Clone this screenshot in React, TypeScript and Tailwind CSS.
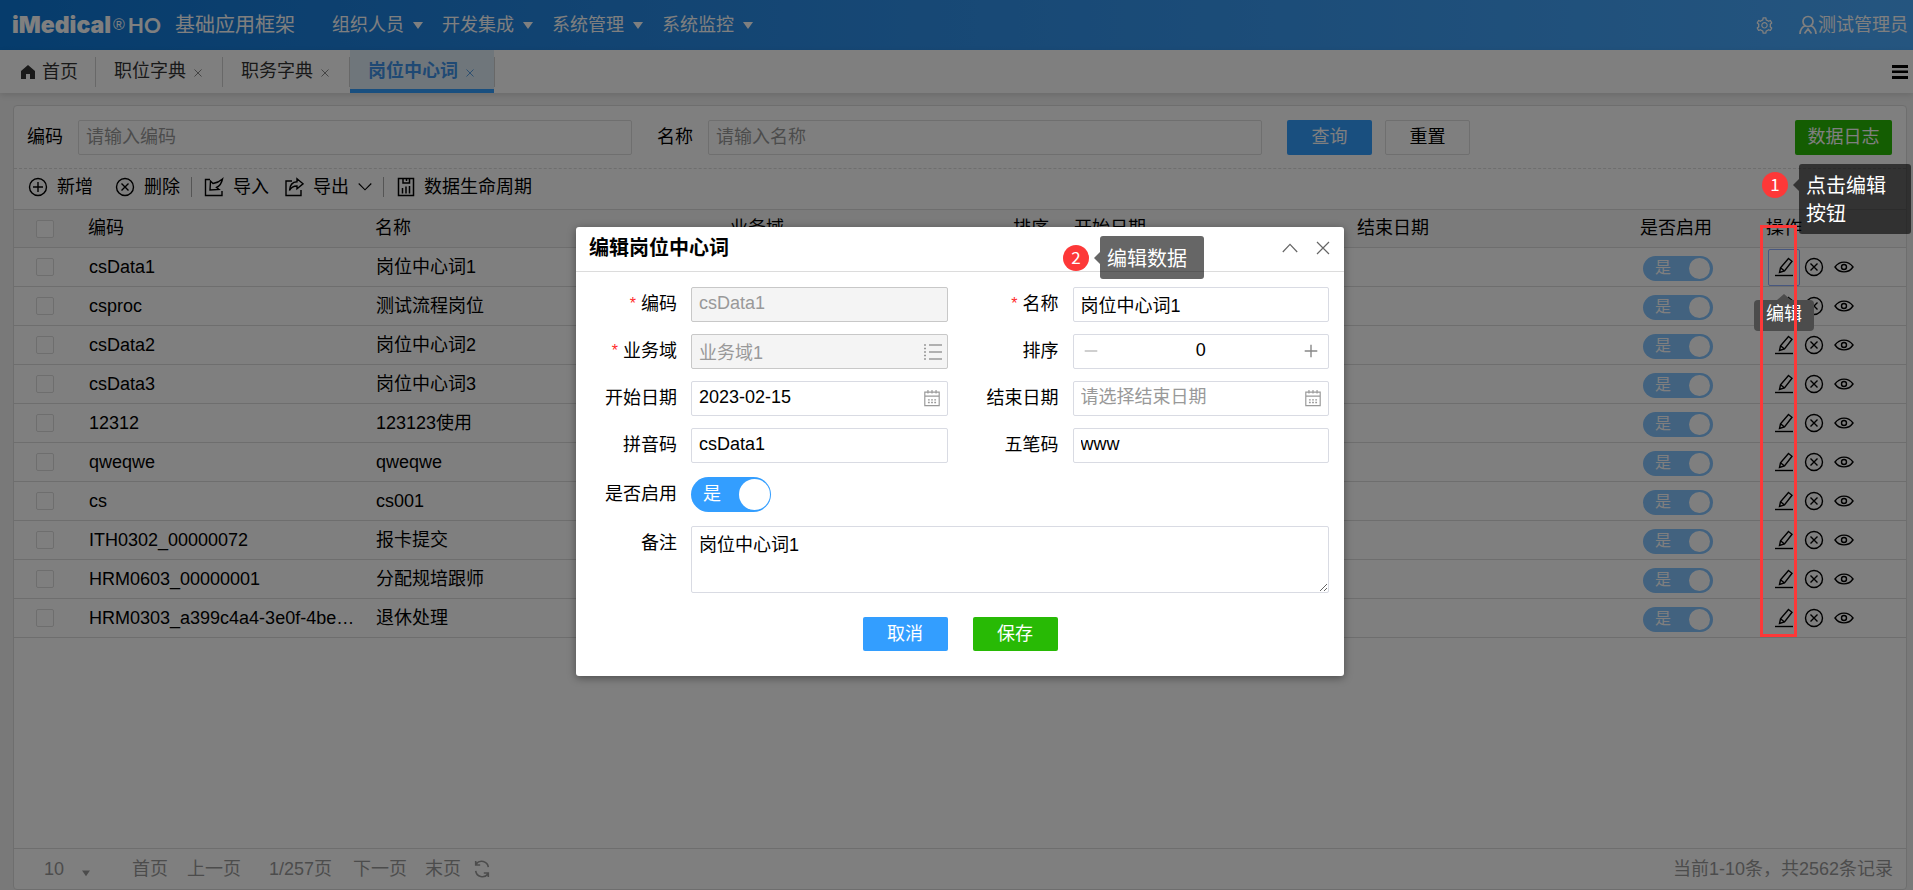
import type { ReactNode } from 'react';
import { AiOutlineSetting } from 'react-icons/ai';

interface Row {
    code: string;
    name: string;
}

const rows: Row[] = [
    { code: 'csData1', name: '岗位中心词1' },
    { code: 'csproc', name: '测试流程岗位' },
    { code: 'csData2', name: '岗位中心词2' },
    { code: 'csData3', name: '岗位中心词3' },
    { code: '12312', name: '123123使用' },
    { code: 'qweqwe', name: 'qweqwe' },
    { code: 'cs', name: 'cs001' },
    { code: 'ITH0302_00000072', name: '报卡提交' },
    { code: 'HRM0603_00000001', name: '分配规培跟师' },
    { code: 'HRM0303_a399c4a4-3e0f-4be…', name: '退休处理' },
];

const menus = ['组织人员', '开发集成', '系统管理', '系统监控'];

interface IconProps {
    size?: number;
    width?: number;
    className?: string;
    children: ReactNode;
}

function Icon({ size = 20, width = 1.4, className = '', children }: IconProps) {
    return (
        <svg
            width={size}
            height={size}
            viewBox="0 0 20 20"
            fill="none"
            stroke="currentColor"
            strokeWidth={width}
            className={`shrink-0 ${className}`}
            aria-hidden="true"
        >
            {children}
        </svg>
    );
}

function CancelIcon() {
    return (
        <Icon>
            <circle cx="10" cy="10" r="8.5" />
            <path d="M6.5 6.5l7 7M13.5 6.5l-7 7" />
        </Icon>
    );
}

function CalendarIcon() {
    return (
        <Icon size={18} width={1.3} className="text-[#999]">
            <path d="M2 3.5h16v15H2zM2 8h16M5.5 1v4M14.5 1v4M10 1v4" />
            <path d="M5.5 12h9M5.5 15h9" strokeWidth="1.5" strokeDasharray="2 1.5" />
        </Icon>
    );
}

function Caret({ size = 10 }: { size?: number }) {
    return (
        <svg width={size} height={size} viewBox="0 0 10 10" fill="currentColor" className="shrink-0" aria-hidden="true">
            <path d="M0 2h10L5 9z" />
        </svg>
    );
}

/* Top bar */
function TopBar() {
    return (
        <header className="flex h-[50px] items-center bg-linear-to-r from-[#0c78d8] to-[#4aabff] pr-[5px] pl-[12px] text-white">
            <div className="flex w-[163px] items-center">
                <span className="font-['Inter'] text-[23px] leading-6 font-black">iMedical</span>
                <span className="ml-[2px] font-['Liberation_Sans'] text-[16px] leading-4">®</span>
                <span className="ml-[3px] font-['Lato'] text-[21px] leading-6 font-bold">HO</span>
            </div>
            <h1 className="text-[20px]">基础应用框架</h1>
            <nav className="ml-[37px] flex gap-[19px]">
                {menus.map((menu) => (
                    <button key={menu} className="flex items-center gap-[9px]">
                        {menu}
                        <Caret />
                    </button>
                ))}
            </nav>
            <button className="ml-auto" aria-label="设置">
                <AiOutlineSetting size={19} />
            </button>
            <button className="ml-[24px] flex items-center">
                <Icon width={1.7}>
                    <circle cx="10" cy="6.5" r="5" />
                    <path d="M2 19c0-4 2-7 5.5-8.5M18 19c0-4-2-7-5.5-8.5M6.5 18.5L10 14l3.5 4.5" />
                </Icon>
                测试管理员
            </button>
        </header>
    );
}

interface TabProps {
    title: string;
    active?: boolean;
}

function Tab({ title, active }: TabProps) {
    return (
        <div
            className={`flex h-full items-center border-b-4 pt-[3px] pr-[19px] pl-[18px] ${
                active ? 'border-[#339eff] bg-[#dfedf7] font-bold text-[#3f93e8]' : 'border-transparent text-[#333]'
            }`}
        >
            <button>{title}</button>
            <button className={`ml-[7px] mt-1 ${active ? 'text-[#5b9fe0]' : 'text-[#888]'}`} aria-label={`关闭${title}`}>
                <Icon size={10} width={2}>
                    <path d="M3 3l14 14M17 3L3 17" />
                </Icon>
            </button>
        </div>
    );
}

function TabSeparator() {
    return <span className="h-[30px] w-px bg-[#d0d0d0]" />;
}

/* Opened pages */
function TabBar() {
    return (
        <div className="flex h-[43px] items-center bg-white pr-[5px] pl-[20px] shadow-[0_2px_6px_rgba(0,0,0,0.12)]">
            <button className="flex items-center gap-[6px] pr-[17px] text-[#333]">
                <svg width="16" height="16" viewBox="0 0 16 16" fill="currentColor" aria-hidden="true">
                    <path d="M8 1L1 7v8h5v-5h4v5h5V7z" />
                </svg>
                首页
            </button>
            <TabSeparator />
            <Tab title="职位字典" />
            <TabSeparator />
            <Tab title="职务字典" />
            <TabSeparator />
            <Tab title="岗位中心词" active />
            <TabSeparator />
            <button className="ml-auto" aria-label="菜单">
                <svg width="16" height="14" viewBox="0 0 16 14" fill="#000" aria-hidden="true">
                    <path d="M0 0h16v3H0zM0 5.5h16v2.5H0zM0 11h16v3H0z" />
                </svg>
            </button>
        </div>
    );
}

function SearchBar() {
    return (
        <form className="flex h-[63px] items-center border-b border-dashed border-[#dcdcdc] pr-[14px] pl-[13px]">
            <label htmlFor="q-code">编码</label>
            <input
                id="q-code"
                placeholder="请输入编码"
                className="ml-[15px] h-[35px] max-w-[554px] min-w-0 flex-1 rounded-[2px] border border-[#dedede] px-[7px] placeholder:text-[#999]"
            />
            <label htmlFor="q-name" className="ml-[25px]">
                名称
            </label>
            <input
                id="q-name"
                placeholder="请输入名称"
                className="ml-[15px] h-[35px] max-w-[554px] min-w-0 flex-1 rounded-[2px] border border-[#dedede] px-[7px] placeholder:text-[#999]"
            />
            <button type="button" className="ml-[25px] h-[35px] w-[85px] rounded-[2px] bg-[#339eff] text-white">
                查询
            </button>
            <button type="button" className="ml-[13px] h-[35px] w-[85px] rounded-[2px] border border-[#dedede]">
                重置
            </button>
            <button type="button" className="ml-auto h-[35px] w-[97px] rounded-[2px] bg-[#28ba05] text-white">
                数据日志
            </button>
        </form>
    );
}

function ToolBar() {
    return (
        <div className="flex h-[40px] items-center pb-1 pl-[14px]">
            <button className="flex items-center gap-[9px]">
                <Icon>
                    <circle cx="10" cy="10" r="8.5" />
                    <path d="M10 5v10M5 10h10" />
                </Icon>
                新增
            </button>
            <button className="ml-[22px] flex items-center gap-[9px]">
                <CancelIcon />
                删除
            </button>
            <span className="ml-[11px] h-[20px] w-px bg-[#aaa]" />
            <button className="ml-[12px] flex items-center gap-[9px]">
                <Icon>
                    <path d="M6 2.5H1.500v16H18V14" />
                    <path d="M6 13L6.500 4l2.500 2.500c3.500-.5 6.500-1.800 9.500-4.500-.8 4-3 7-6 8.500L15 12.500z" />
                </Icon>
                导入
            </button>
            <button className="ml-[15px] flex items-center gap-[9px]">
                <Icon>
                    <path d="M8 4H2v14.5h15V13" />
                    <path d="M13 1.8l6 5-6 5V9c-3.5 0-6 1.5-7.5 4.5.3-5 3-8.5 7.5-8.7z" />
                </Icon>
                导出
                <Icon size={14} width={1.6}>
                    <path d="M1 5l9 9 9-9" />
                </Icon>
            </button>
            <span className="ml-[11px] h-[20px] w-px bg-[#aaa]" />
            <button className="ml-[12px] flex items-center gap-[8px]">
                <Icon width={1.5}>
                    <path d="M2.5 1.5h15v17h-15zM7 1.5V6h6.5V1.5M10.5 1.5v2.5" />
                    <path d="M6.5 16.5V11M10 16.500V9.500M13.500 16.500V9" />
                </Icon>
                数据生命周期
            </button>
        </div>
    );
}

function RowSwitch({ name }: { name: string }) {
    return (
        <label className="relative mt-[2px] ml-[3px] flex h-[25px] w-[70px] items-center rounded-full bg-[#85c4ff] pl-[12px] text-[16px] leading-none text-white">
            <input type="checkbox" className="sr-only" defaultChecked disabled aria-label={`${name}是否启用`} />
            是
            <span className="absolute top-[2px] right-[3px] size-[21px] rounded-full bg-white" />
        </label>
    );
}

function DataTable() {
    return (
        <table className="w-full table-fixed border-collapse text-left">
            <colgroup>
                <col className="w-[65px]" />
                <col className="w-[287px]" />
                <col className="w-[355px]" />
                <col className="w-[283px]" />
                <col className="w-[61px]" />
                <col className="w-[283px]" />
                <col className="w-[283px]" />
                <col className="w-[126px]" />
                <col />
            </colgroup>
            <thead>
                <tr className="h-[38px] border-y border-[#dcdcdc] bg-[#f7f7f7]">
                    <th className="pl-[22px]">
                        <input type="checkbox" aria-label="全选" className="block size-[18px] appearance-none rounded-[2px] border border-[#dcdcdc] bg-white" />
                    </th>
                    {['编码', '名称', '业务域', '排序', '开始日期', '结束日期', '是否启用', '操作'].map((title) => (
                        <th key={title} className="px-[9px] pb-px font-normal whitespace-nowrap">
                            {title}
                        </th>
                    ))}
                </tr>
            </thead>
            <tbody>
                {rows.map((row, i) => (
                    <tr key={row.code} className="h-[39px] border-b border-[#dcdcdc]">
                        <td className="pl-[22px]">
                            <input
                                type="checkbox"
                                aria-label={`选择${row.code}`}
                                className="block size-[18px] appearance-none rounded-[2px] border border-[#dcdcdc]"
                            />
                        </td>
                        <td className="pb-px pl-[10px] whitespace-nowrap">{row.code}</td>
                        <td className="pb-px pl-[10px] whitespace-nowrap">{row.name}</td>
                        <td />
                        <td />
                        <td />
                        <td />
                        <td className="px-[9px]">
                            <RowSwitch name={row.name} />
                        </td>
                        <td className="pl-[11px]">
                            <div className="flex items-center">
                                <button
                                    className={`flex h-[37px] w-[32px] items-center justify-center rounded-[2px] border ${
                                        i === 0 ? 'border-[#8faeff]' : 'border-transparent'
                                    }`}
                                    aria-label="编辑"
                                >
                                    <Icon>
                                        <path d="M14.5 1.5l3.500 2.800-7.500 9.700-5 1.500 1-4.700zM6.500 10.800l4 3.200" />
                                        <path d="M1 18.5h18" />
                                    </Icon>
                                </button>
                                <button className="ml-[4px]" aria-label="删除">
                                    <CancelIcon />
                                </button>
                                <button className="ml-[10px]" aria-label="查看">
                                    <Icon>
                                        <path d="M1 10c4.5-6.500 13.500-6.500 18 0-4.500 6.500-13.500 6.500-18 0z" />
                                        <circle cx="10" cy="10" r="2.5" />
                                    </Icon>
                                </button>
                            </div>
                        </td>
                    </tr>
                ))}
            </tbody>
        </table>
    );
}

function Pagination() {
    return (
        <footer className="mt-auto flex h-[41px] items-center border-t border-[#dcdcdc] pr-[13px] pl-[30px] text-[#999]">
            <div className="relative">
                <select aria-label="每页条数" className="w-[46px] appearance-none bg-transparent">
                    <option>10</option>
                </select>
                <span className="pointer-events-none absolute right-0 bottom-1">
                    <Caret size={8} />
                </span>
            </div>
            <button className="ml-[42px]">首页</button>
            <button className="ml-[19px]">上一页</button>
            <span className="ml-[28px]">1/257页</span>
            <button className="ml-[21px]">下一页</button>
            <button className="ml-[18px]">末页</button>
            <button className="ml-[12px]" aria-label="刷新">
                <Icon size={18} width={1.8}>
                    <path d="M3 12a7.5 7.5 0 0 0 13.5 3.5M17 8A7.5 7.5 0 0 0 3.5 4.5M3 1v4.5h5M17 19v-4.5h-5" />
                </Icon>
            </button>
            <span className="ml-auto">当前1-10条，共2562条记录</span>
        </footer>
    );
}

interface FieldProps {
    id: string;
    label: string;
    required?: boolean;
    children: ReactNode;
}

function Field({ id, label, required, children }: FieldProps) {
    return (
        <>
            <label htmlFor={id} className="flex h-[34px] items-center justify-end gap-[5px] pr-[14px]">
                {required && <span className="text-[16px] text-[#ff2a2a]">*</span>}
                {label}
            </label>
            <div className="relative">{children}</div>
        </>
    );
}

const inputClass =
    'block h-[35px] w-full rounded-[2px] border border-[#d9dbe3] bg-white px-[7px] pb-[2px] placeholder:text-[#999] disabled:border-[#c8c8c8] disabled:bg-[#f4f4f4] disabled:text-[#999]';

function StepNumber({ step }: { step: number }) {
    return (
        <span className="flex size-[26px] items-center justify-center rounded-full bg-[#fd3838] pb-[3px] font-['Noto_Sans_CJK_SC'] text-[17px] leading-none text-white">
            {step}
        </span>
    );
}

function EditDialog() {
    return (
        <section
            role="dialog"
            aria-label="编辑岗位中心词"
            className="relative w-[768px] rounded-[3px] bg-white pb-[25px] shadow-[0_2px_8px_rgba(0,0,0,0.4)]"
        >
            <div className="flex h-[45px] items-center border-b border-[#dcdcdc] pr-[13px] pb-[2px] pl-[13px]">
                <h2 className="text-[20px] font-bold">编辑岗位中心词</h2>
                <button className="ml-auto text-[#666]" aria-label="收起">
                    <Icon size={16} width={1.5}>
                        <path d="M1 15L10 5.5 19 15" />
                    </Icon>
                </button>
                <button className="ml-[17px] text-[#666]" aria-label="关闭">
                    <Icon size={16} width={1.5}>
                        <path d="M2.5 2.5l15 15M17.5 2.5l-15 15" />
                    </Icon>
                </button>
            </div>

            <form>
                <div className="grid grid-cols-[115px_1fr_125px_1fr] gap-y-3 pt-[15px] pr-[15px]">
                    <Field id="code" label="编码" required>
                        <input id="code" className={inputClass} defaultValue="csData1" disabled />
                    </Field>
                    <Field id="name" label="名称" required>
                        <input id="name" className={inputClass} defaultValue="岗位中心词1" />
                    </Field>
                    <Field id="domain" label="业务域" required>
                        <input id="domain" className={inputClass} defaultValue="业务域1" disabled />
                        <span className="absolute top-[8px] right-[5px] text-[#999]">
                            <Icon width={1.4}>
                                <path d="M6 3h13M6 10h13M6 17h13" />
                                <path d="M1 3h2M1 6.5h2M1 10h2M1 13.5h2M1 17h2" strokeWidth="1.6" />
                            </Icon>
                        </span>
                    </Field>
                    <Field id="sort" label="排序">
                        <input id="sort" inputMode="numeric" className={`${inputClass} text-center`} defaultValue="0" />
                        <button type="button" className="absolute top-[10px] left-[11px] text-[#bbb]" aria-label="减少">
                            <Icon size={14} width={2}>
                                <path d="M1 10h18" />
                            </Icon>
                        </button>
                        <button type="button" className="absolute top-[10px] right-[11px] text-[#888]" aria-label="增加">
                            <Icon size={14} width={2}>
                                <path d="M1 10h18M10 1v18" />
                            </Icon>
                        </button>
                    </Field>
                    <Field id="start" label="开始日期">
                        <input id="start" className={inputClass} defaultValue="2023-02-15" />
                        <span className="absolute top-[8px] right-[7px]">
                            <CalendarIcon />
                        </span>
                    </Field>
                    <Field id="end" label="结束日期">
                        <input id="end" className={inputClass} placeholder="请选择结束日期" />
                        <span className="absolute top-[8px] right-[7px]">
                            <CalendarIcon />
                        </span>
                    </Field>
                    <Field id="pinyin" label="拼音码">
                        <input id="pinyin" className={inputClass} defaultValue="csData1" />
                    </Field>
                    <Field id="wubi" label="五笔码">
                        <input id="wubi" className={inputClass} defaultValue="www" />
                    </Field>
                </div>

                <div className="mt-[14px] grid grid-cols-[115px_1fr] gap-y-[14px] pr-[15px]">
                    <Field id="enabled" label="是否启用">
                        <input id="enabled" type="checkbox" defaultChecked className="sr-only" />
                        <label htmlFor="enabled" className="flex h-[35px] w-[80px] items-center rounded-full bg-[#339eff] pb-px pl-[12px] text-white">
                            是
                            <span className="absolute top-[2px] left-[48px] size-[31px] rounded-full bg-white" />
                        </label>
                    </Field>
                    <Field id="remark" label="备注">
                        <textarea
                            id="remark"
                            className="block h-[67px] w-full rounded-[2px] border border-[#d9dbe3] px-[7px] py-[6px]"
                            defaultValue="岗位中心词1"
                        />
                    </Field>
                </div>

                <div className="mt-[24px] flex justify-center gap-[25px]">
                    <button type="button" className="h-[34px] w-[85px] rounded-[2px] bg-[#339eff] text-white">
                        取消
                    </button>
                    <button type="button" className="h-[34px] w-[85px] rounded-[2px] bg-[#28ba05] text-white">
                        保存
                    </button>
                </div>
            </form>

            {/* Step 2 */}
            <div className="absolute top-[9px] left-[487px] flex items-center">
                <StepNumber step={2} />
                <span className="ml-[5px] border-y-6 border-r-6 border-y-transparent border-r-black/60" />
                <p className="rounded-[3px] bg-black/60 pt-[9px] pr-[17px] pb-[6px] pl-[7px] text-[20px] leading-7 text-white">编辑数据</p>
            </div>
        </section>
    );
}

function App() {
    return (
        <div className="relative flex min-h-screen flex-col overflow-hidden bg-[#f2f2f2] font-['Liberation_Sans','Noto_Sans_CJK_SC',sans-serif] text-[18px] leading-6 text-black">
            <TopBar />
            <TabBar />
            <main className="mt-[12px] mr-[6px] ml-[13px] flex flex-1 flex-col rounded-[4px] border border-[#dcdcdc] bg-white">
                <SearchBar />
                <ToolBar />
                <DataTable />
                <Pagination />
            </main>

            {/* Tooltip of the focused edit button, its label stays above the dialog mask */}
            <div className="absolute top-[294px] right-[99px] flex flex-col items-center">
                <span className="border-x-7 border-b-6 border-x-transparent border-b-[#989898]" />
                <span className="h-[31px] w-[60px] rounded-[4px] bg-[#989898]" />
            </div>

            {/* Dialog layer */}
            <div className="absolute inset-0 flex items-start justify-center bg-black/50 pt-[227px] pl-[7px]">
                <EditDialog />
            </div>

            {/* Step 1 */}
            <span className="absolute top-[302px] right-[111px] text-white">编辑</span>
            <div className="absolute top-[225px] right-[116px] h-[412px] w-[37px] border-3 border-[#fd3838]" />
            <div className="absolute top-[164px] right-[2px] flex w-[149px] items-start">
                <div className="flex h-[42px] items-center">
                    <StepNumber step={1} />
                    <span className="ml-[5px] border-y-6 border-r-6 border-y-transparent border-r-black/60" />
                </div>
                <p className="flex-1 rounded-[3px] bg-black/60 pt-[8px] pr-[20px] pb-[6px] pl-[7px] text-[20px] leading-7 text-white">
                    点击编辑按钮
                </p>
            </div>
        </div>
    );
}

export default App;
